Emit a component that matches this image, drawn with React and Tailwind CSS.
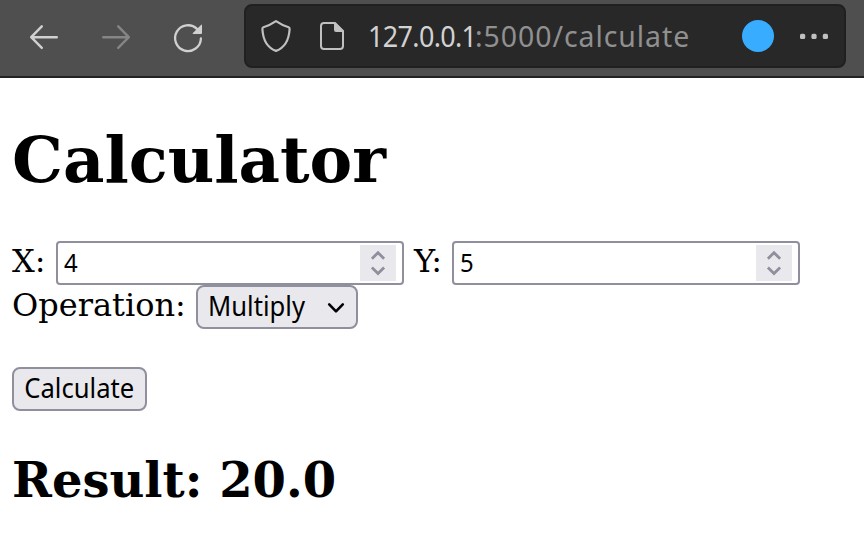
function Toolbar() {
  return (
    <header className="flex h-[78px] items-start border-b-2 border-[#232323] bg-[#4f4f4f] font-['Noto_Sans',sans-serif]">
      <nav className="flex w-[244px] shrink-0 pt-[22px] pl-7">
        <svg className="mr-10 h-8 w-8" viewBox="0 0 32 32" fill="none" stroke="#d0d0d0" strokeWidth="2.4" strokeLinecap="round" strokeLinejoin="round">
          <path d="M28.800 15.200H3.200M13.800 4.300 3.200 15.200l10.600 10.700" />
        </svg>
        <svg className="mr-10 h-8 w-8" viewBox="0 0 32 32" fill="none" stroke="#858585" strokeWidth="2.4" strokeLinecap="round" strokeLinejoin="round">
          <path d="M3.200 15.200h25.600M18.200 4.300l10.600 10.900-10.600 10.700" />
        </svg>
        <svg className="h-8 w-8" viewBox="0 0 32 32" fill="none" stroke="#d0d0d0" strokeWidth="2.3" strokeLinecap="round">
          <path d="M28.900 16.500A12.900 12.900 0 1 1 25 6.900" />
          <path d="M30 3v8q0 1-1 1h-7.600q-1.400 0-.5-1L29 2.900q1-.9 1 .1z" fill="#d0d0d0" stroke="none" />
        </svg>
      </nav>
      <div className="mt-1 flex h-16 w-[602px] items-center rounded-[8px] border-2 border-[#202020] bg-[#282828] pl-[14px]">
        <svg className="mr-6 h-9 w-8 shrink-0" viewBox="0 0 32 36" fill="none" stroke="#c0c0c0" strokeWidth="2.2" strokeLinejoin="round">
          <path d="M16 3.200Q22.500 7.600 28.600 9.300q1.100.3 1 1.900C29 21.500 25 29.500 16 32.900 7 29.500 3 21.500 2.400 11.200q-.1-1.600 1-1.900Q9.500 7.600 16 3.200z" />
        </svg>
        <svg className="h-9 w-8 shrink-0" viewBox="0 0 32 36" fill="none" stroke="#c0c0c0" strokeWidth="2">
          <path d="M19 5H8Q5 5 5 8v20q0 3 3 3h16q3 0 3-3V13l-8-8z" strokeLinejoin="round" />
          <path d="M18 4.500V12q0 2 2 2h7.500v-1.400L19 4.500z" fill="#c0c0c0" stroke="none" />
        </svg>
        <div className="ml-5 flex h-10 w-[374px] text-[29px] leading-[39px] whitespace-pre">
          <span className="w-[107px]">
            <span className="inline-block origin-left scale-x-[0.930] tracking-[-0.700px] text-[#d2d2d2]">127.0.0.1</span>
          </span>
          <span className="inline-block origin-left scale-x-[0.980] tracking-[0.970px] text-[#909090]">:5000/calculate</span>
        </div>
        <span className="h-8 w-8 shrink-0 rounded-full bg-[#38adff]" />
        <svg className="ml-[26px] h-[6px] w-7 shrink-0" viewBox="0 0 28 6" fill="#c0c0c0">
          <rect width="5.200" height="5.200" x="0" y=".8" rx="1.600" />
          <rect width="5.200" height="5.200" x="11.400" y=".8" rx="1.600" />
          <rect width="5.200" height="5.200" x="22.800" y=".8" rx="1.600" />
        </svg>
      </div>
    </header>
  );
}

function NumberField({ value }) {
  return (
    <div className="flex h-11 w-[348px] items-center justify-between rounded-[4px] border-2 border-[#8f8f9d] bg-white pr-[6px] pl-[6px] font-['Noto_Sans',sans-serif] text-[26px]">
      <span className="-mt-0.5 inline-block origin-left scale-x-[0.920] leading-[38px]">{value}</span>
      <svg className="h-9 w-9" viewBox="0 0 36 36" fill="none" stroke="#8f8f9d" strokeWidth="2.800">
        <rect width="36" height="36" fill="#e9e9ed" stroke="none" />
        <path d="M11.900 13.700 18 7.700l6.100 6M11.900 22.600l6.100 6 6.100-6" />
      </svg>
    </div>
  );
}

export default function App() {
  return (
    <div className="h-[542px] overflow-hidden bg-white font-['DejaVu_Serif',serif] text-black">
      <Toolbar />
      <main className="px-3 pt-11">
        <h1 className="h-[76px] text-[64px] leading-[76px] font-bold">Calculator</h1>
        <div className="mt-[43px] flex h-11 text-[32px] leading-[40px] whitespace-nowrap">
          <span className="w-11">X:</span>
          <NumberField value="4" />
          <span className="ml-[10px] w-[38px]">Y:</span>
          <NumberField value="5" />
        </div>
        <div className="flex h-11 text-[32px] leading-[40px] whitespace-nowrap">
          <span className="w-[184px]">Operation:</span>
          <div className="flex h-11 w-[162px] items-center justify-between rounded-[8px] border-2 border-[#8f8f9d] bg-[#e9e9ed] pr-[10px] pl-[10px] font-['Noto_Sans',sans-serif] text-[26.700px]">
            <span className="-mt-0.5 inline-block w-[98px] origin-left scale-x-[0.960] leading-[38px]">Multiply</span>
            <svg className="h-5 w-5" viewBox="0 0 20 20" fill="none" stroke="#000" strokeWidth="2.600" strokeLinecap="round" strokeLinejoin="round">
              <path d="m3.200 7.400 6.800 7 6.800-7" />
            </svg>
          </div>
        </div>
        <button className="mt-[38px] flex h-11 w-[135px] items-center justify-center rounded-[8px] border-2 border-[#8f8f9d] bg-[#e9e9ed] font-['Noto_Sans',sans-serif] text-[26.700px]">
          <span className="-mt-0.5 inline-block scale-x-[0.960] leading-[38px]">Calculate</span>
        </button>
        <h2 className="mt-[41px] h-14 text-[48px] leading-[56px] font-bold">Result: 20.0</h2>
      </main>
    </div>
  );
}
